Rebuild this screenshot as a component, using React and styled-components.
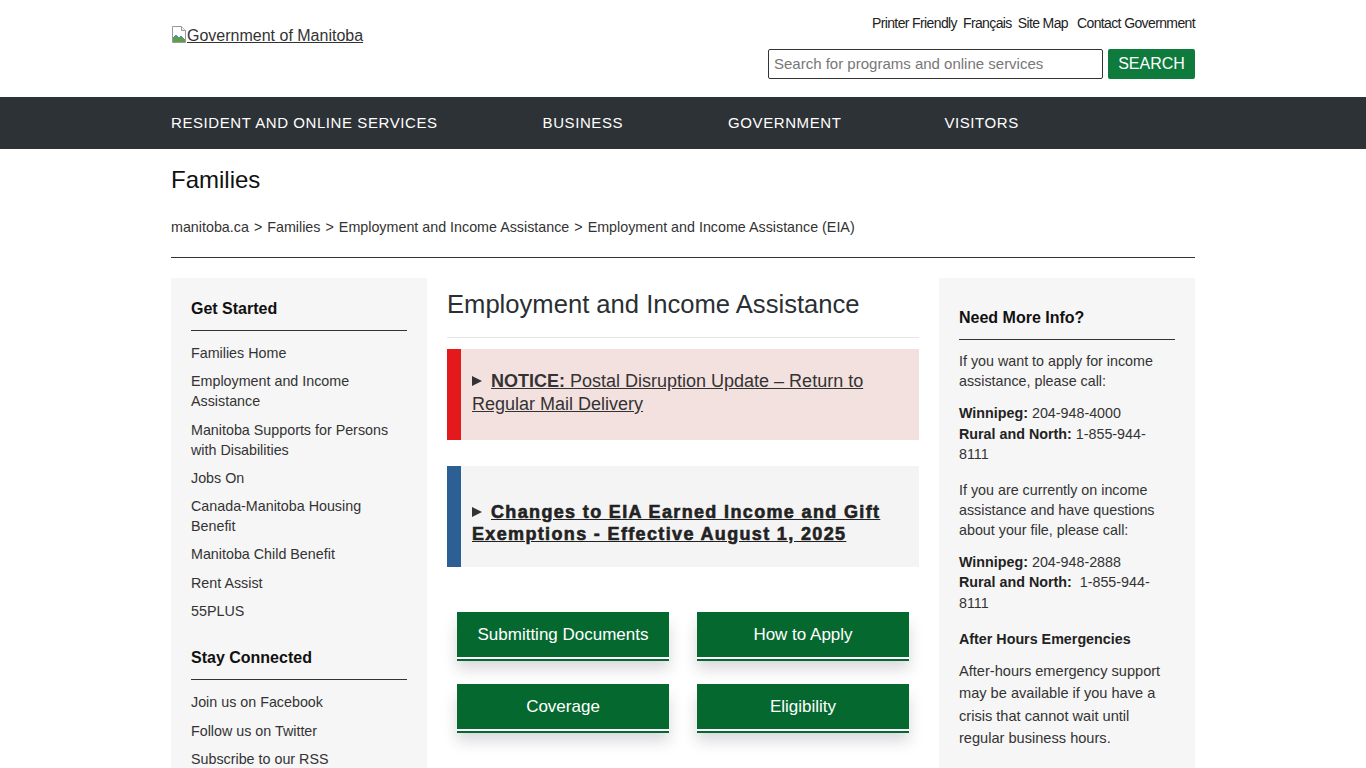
import React from "react";
import styled, { createGlobalStyle } from "styled-components";

const Global = createGlobalStyle`
  html, body { margin: 0; padding: 0; background: #fff; }
  body { font-family: "Liberation Sans", Arial, sans-serif; color: #333; }
  * { box-sizing: border-box; }
  a { color: inherit; }
`;

const Container = styled.div`
  width: 1024px;
  margin: 0 auto;
`;

const Header = styled(Container)`
  height: 97px;
  display: flex;
  justify-content: space-between;
  align-items: flex-start;
`;

const Logo = styled.a`
  margin-top: 26px;
  display: inline-flex;
  align-items: flex-start;
  font-size: 16px;
  line-height: 19px;
  color: #333;
  text-decoration: underline;
`;

const Utility = styled.div`
  display: flex;
  flex-direction: column;
  align-items: flex-end;
  padding-top: 15px;
`;

const TopLinks = styled.nav`
  display: flex;
  gap: 6px;
  font-size: 14px;
  line-height: 16px;
  letter-spacing: -0.62px;
  color: #222;
`;

const TopLink = styled.a`
  text-decoration: none;
  color: #222;
  margin-left: ${(p) => (p.$wide ? "3px" : "0")};
`;

const SearchRow = styled.form`
  margin-top: 18px;
  display: flex;
  gap: 5px;
`;

const SearchInput = styled.input`
  width: 335px;
  height: 30px;
  border: 1px solid #333;
  border-radius: 2px;
  padding: 0 5px 1px;
  font-family: "Liberation Sans", Arial, sans-serif;
  font-size: 15px;
  color: #333;
  &::placeholder { color: #777; }
`;

const SearchButton = styled.button`
  width: 87px;
  height: 30px;
  border: none;
  border-radius: 2px;
  background: #0e7b3c;
  color: #fff;
  font-family: "Liberation Sans", Arial, sans-serif;
  font-size: 16px;
  padding: 0;
`;

const NavBar = styled.nav`
  background: #2d3237;
  height: 52px;
`;

const NavInner = styled(Container)`
  display: flex;
  align-items: center;
  height: 100%;
  padding-bottom: 2px;
`;

const NavItem = styled.a`
  color: #fff;
  text-decoration: none;
  text-transform: uppercase;
  font-size: 15px;
  letter-spacing: 0.58px;
  margin-right: ${(p) => p.$gap || "105px"};
`;

const TitleArea = styled(Container)`
  padding-top: 17px;
`;

const PageTitle = styled.h1`
  margin: 0;
  font-size: 24px;
  line-height: 28px;
  font-weight: normal;
  color: #111;
`;

const Crumbs = styled.div`
  margin-top: 23px;
  font-size: 14.3px;
  line-height: 20px;
  color: #333;
  padding-bottom: 20px;
  border-bottom: 1px solid #333;
`;

const Crumb = styled.a`
  text-decoration: none;
  color: #333;
`;

const Sep = styled.span`
  margin: 0 5px;
`;

const Columns = styled(Container)`
  margin-top: 20px;
  display: grid;
  grid-template-columns: 256px 472px 256px;
  column-gap: 20px;
  align-items: start;
`;

const Sidebar = styled.aside`
  background: #f6f6f6;
  padding: ${(p) => (p.$top ? p.$top : "21px")} 20px 40px;
  min-height: 520px;
`;

const SideHeading = styled.h2`
  margin: ${(p) => (p.$first ? "0" : "23px 0 0")};
  font-size: 16px;
  line-height: 20px;
  font-weight: bold;
  color: #111;
  padding-bottom: 11px;
  border-bottom: 1px solid #333;
`;

const SideList = styled.ul`
  list-style: none;
  margin: 8px 0 0;
  padding: 0;
`;

const SideItem = styled.li`
  padding: 4px 0 4.3px;
  font-size: 14.3px;
  line-height: 20px;
  a { text-decoration: none; color: #333; }
`;

const Main = styled.main`
  padding-top: 11px;
`;

const MainTitle = styled.h2`
  margin: 0;
  font-size: 25.6px;
  line-height: 30px;
  font-weight: normal;
  color: #2a2f33;
  padding-bottom: 18px;
  border-bottom: 1px solid #e6e6e6;
`;

const Alert = styled.div`
  margin-top: ${(p) => p.$mt};
  background: ${(p) => p.$bg};
  border-left: 14px solid ${(p) => p.$accent};
  padding: ${(p) => p.$pad};
  font-size: 18px;
  line-height: ${(p) => p.$lh};
  color: #333;
`;

const Marker = styled.span`
  display: inline-block;
  width: 0;
  height: 0;
  border-left: 10px solid #333;
  border-top: 5.5px solid transparent;
  border-bottom: 5.5px solid transparent;
  margin-right: 9px;
  vertical-align: 1px;
`;

const AlertLink = styled.a`
  color: #333;
  text-decoration: underline;
  b { font-weight: bold; }
`;

const StrongLink = styled.a`
  color: #222;
  font-weight: bold;
  letter-spacing: 1.35px;
  text-decoration: underline;
  -webkit-text-stroke: 0.6px #222;
`;

const ButtonGrid = styled.div`
  margin-top: 45px;
  padding: 0 10px 40px;
  display: grid;
  grid-template-columns: 212px 212px;
  column-gap: 28px;
  row-gap: 27px;
`;

const GreenButton = styled.a`
  height: 45px;
  display: flex;
  align-items: center;
  justify-content: center;
  background: #05692f;
  color: #fff;
  text-decoration: none;
  font-size: 17px;
  box-shadow: 0 2px 0 0 #fff, 0 4px 0 0 #05692f, 0 12px 14px rgba(40, 40, 60, 0.18);
`;

const Info = styled.p`
  margin: ${(p) => p.$m || "0"};
  font-size: ${(p) => p.$fs || "14.3px"};
  line-height: ${(p) => p.$lh || "20px"};
  color: #333;
  b { color: #222; }
`;

const InfoHeading = styled.h3`
  margin: 16px 0 0;
  font-size: 14.3px;
  line-height: 20px;
  font-weight: bold;
  color: #222;
`;

function BrokenImage() {
  return (
    <svg width="16" height="18" viewBox="0 0 16 18">
      <path d="M1.5 0.5h9l4 4v12h-13z" fill="#fff" stroke="#9a9a9a" />
      <path d="M10.5 0.5v4h4" fill="#eee" stroke="#9a9a9a" />
      <path d="M2 16V12l3-3 3 3 2-2 4 4v2z" fill="#5e9e4a" />
      <path d="M2 12l3-3 3 3 2-2 4 4" fill="none" stroke="#3f7fbf" strokeWidth="0.8" />
    </svg>
  );
}

const leftLinks = [
  "Families Home",
  "Employment and Income Assistance",
  "Manitoba Supports for Persons with Disabilities",
  "Jobs On",
  "Canada-Manitoba Housing Benefit",
  "Manitoba Child Benefit",
  "Rent Assist",
  "55PLUS",
];

const connectLinks = ["Join us on Facebook", "Follow us on Twitter", "Subscribe to our RSS"];

const navItems = [
  { label: "Resident and Online Services", gap: "105px" },
  { label: "Business", gap: "105px" },
  { label: "Government", gap: "103px" },
  { label: "Visitors", gap: "0" },
];

const buttons = ["Submitting Documents", "How to Apply", "Coverage", "Eligibility"];

export default function App() {
  return (
    <>
      <Global />
      <Header as="header">
        <Logo href="#">
          <BrokenImage />
          Government of Manitoba
        </Logo>
        <Utility>
          <TopLinks>
            <TopLink href="#">Printer Friendly</TopLink>
            <TopLink href="#">Français</TopLink>
            <TopLink href="#">Site Map</TopLink>
            <TopLink href="#" $wide>Contact Government</TopLink>
          </TopLinks>
          <SearchRow onSubmit={(e) => e.preventDefault()}>
            <SearchInput placeholder="Search for programs and online services" />
            <SearchButton type="submit">SEARCH</SearchButton>
          </SearchRow>
        </Utility>
      </Header>
      <NavBar>
        <NavInner>
          {navItems.map((n) => (
            <NavItem href="#" key={n.label} $gap={n.gap}>{n.label}</NavItem>
          ))}
        </NavInner>
      </NavBar>
      <TitleArea>
        <PageTitle>Families</PageTitle>
        <Crumbs>
          <Crumb href="#">manitoba.ca</Crumb>
          <Sep>&gt;</Sep>
          <Crumb href="#">Families</Crumb>
          <Sep>&gt;</Sep>
          <Crumb href="#">Employment and Income Assistance</Crumb>
          <Sep>&gt;</Sep>
          <span>Employment and Income Assistance (EIA)</span>
        </Crumbs>
      </TitleArea>
      <Columns>
        <Sidebar>
          <SideHeading $first>Get Started</SideHeading>
          <SideList>
            {leftLinks.map((l) => (
              <SideItem key={l}><a href="#">{l}</a></SideItem>
            ))}
          </SideList>
          <SideHeading>Stay Connected</SideHeading>
          <SideList>
            {connectLinks.map((l) => (
              <SideItem key={l}><a href="#">{l}</a></SideItem>
            ))}
          </SideList>
        </Sidebar>
        <Main>
          <MainTitle>Employment and Income Assistance</MainTitle>
          <Alert $mt="11px" $bg="#f3e1df" $accent="#e3191b" $pad="21px 20px 24px 11px" $lh="23px">
            <Marker />
            <AlertLink href="#"><b>NOTICE:</b> Postal Disruption Update – Return to Regular Mail Delivery</AlertLink>
          </Alert>
          <Alert $mt="26px" $bg="#f4f4f4" $accent="#2c5f94" $pad="35px 20px 22px 11px" $lh="22px">
            <Marker />
            <StrongLink href="#">Changes to EIA Earned Income and Gift Exemptions - Effective August 1, 2025</StrongLink>
          </Alert>
          <ButtonGrid>
            {buttons.map((b) => (
              <GreenButton href="#" key={b}>{b}</GreenButton>
            ))}
          </ButtonGrid>
        </Main>
        <Sidebar $top="30px">
          <SideHeading $first>Need More Info?</SideHeading>
          <Info $m="11px 0 12px">If you want to apply for income assistance, please call:</Info>
          <Info $lh="20.5px">
            <b>Winnipeg:</b> 204-948-4000<br />
            <b>Rural and North:</b> 1-855-944-8111
          </Info>
          <Info $m="15px 0 12px">If you are currently on income assistance and have questions about your file, please call:</Info>
          <Info $lh="20.5px">
            <b>Winnipeg:</b> 204-948-2888<br />
            <b>Rural and North:</b>&nbsp; 1-855-944-8111
          </Info>
          <InfoHeading>After Hours Emergencies</InfoHeading>
          <Info $m="11px 0 0" $lh="22.4px" $fs="14.6px">
            After-hours emergency support may be available if you have a crisis that cannot wait until regular business hours.
          </Info>
        </Sidebar>
      </Columns>
    </>
  );
}
